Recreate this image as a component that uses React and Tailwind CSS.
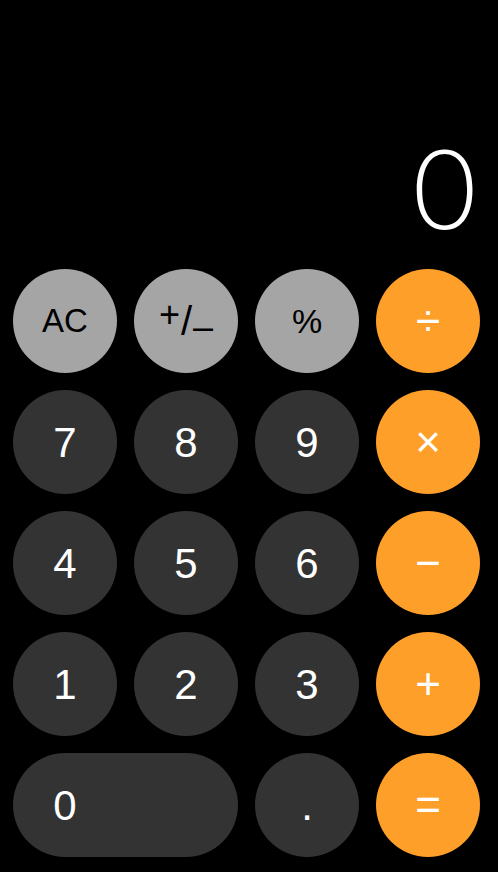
import React from "react";

const GRAY = "bg-[#a5a5a5] text-black";
const DARK = "bg-[#333333] text-white";
const ORANGE = "bg-[#fe9f2a] text-white";

function Btn({ children, cls, textCls = "text-[42px]" }) {
  return (
    <div
      className={`w-[104px] h-[104px] rounded-full flex items-center justify-center ${cls} ${textCls}`}
      style={{ fontFamily: '"Liberation Sans", Arial, sans-serif' }}
    >
      {children}
    </div>
  );
}

export default function App() {
  return (
    <div className="w-[498px] h-[872px] bg-black flex flex-col justify-end overflow-hidden">
      <div
        className="text-white text-right pr-[16px] text-[108px] font-extralight leading-none mb-[25px] scale-x-[1.1] origin-right"
        style={{ fontFamily: 'Inter, "Noto Sans", sans-serif' }}
      >
        0
      </div>
      <div className="grid grid-cols-[repeat(4,104px)] gap-[17px] pl-[13px] pb-[15px]">
        <Btn cls={GRAY} textCls="text-[33px]">AC</Btn>
        <Btn cls={GRAY} textCls="text-[36px]">
          <span className="flex items-center leading-none gap-[1px]">
            <span className="relative -top-[6px] text-[36px]">+</span>
            <span className="text-[40px]">/</span>
            <span className="relative top-[6px] text-[36px]">–</span>
          </span>
        </Btn>
        <Btn cls={GRAY} textCls="text-[34px]">%</Btn>
        <Btn cls={ORANGE} textCls="text-[44px]">÷</Btn>

        <Btn cls={DARK}>7</Btn>
        <Btn cls={DARK}>8</Btn>
        <Btn cls={DARK}>9</Btn>
        <Btn cls={ORANGE} textCls="text-[44px]">×</Btn>

        <Btn cls={DARK}>4</Btn>
        <Btn cls={DARK}>5</Btn>
        <Btn cls={DARK}>6</Btn>
        <Btn cls={ORANGE} textCls="text-[44px]">−</Btn>

        <Btn cls={DARK}>1</Btn>
        <Btn cls={DARK}>2</Btn>
        <Btn cls={DARK}>3</Btn>
        <Btn cls={ORANGE} textCls="text-[44px]">+</Btn>

        <div
          className="col-span-2 h-[104px] rounded-full bg-[#333333] text-white text-[42px] flex items-center"
          style={{ fontFamily: '"Liberation Sans", Arial, sans-serif' }}
        >
          <div className="w-[104px] flex justify-center">0</div>
        </div>
        <Btn cls={DARK}>.</Btn>
        <Btn cls={ORANGE} textCls="text-[44px]">=</Btn>
      </div>
    </div>
  );
}
